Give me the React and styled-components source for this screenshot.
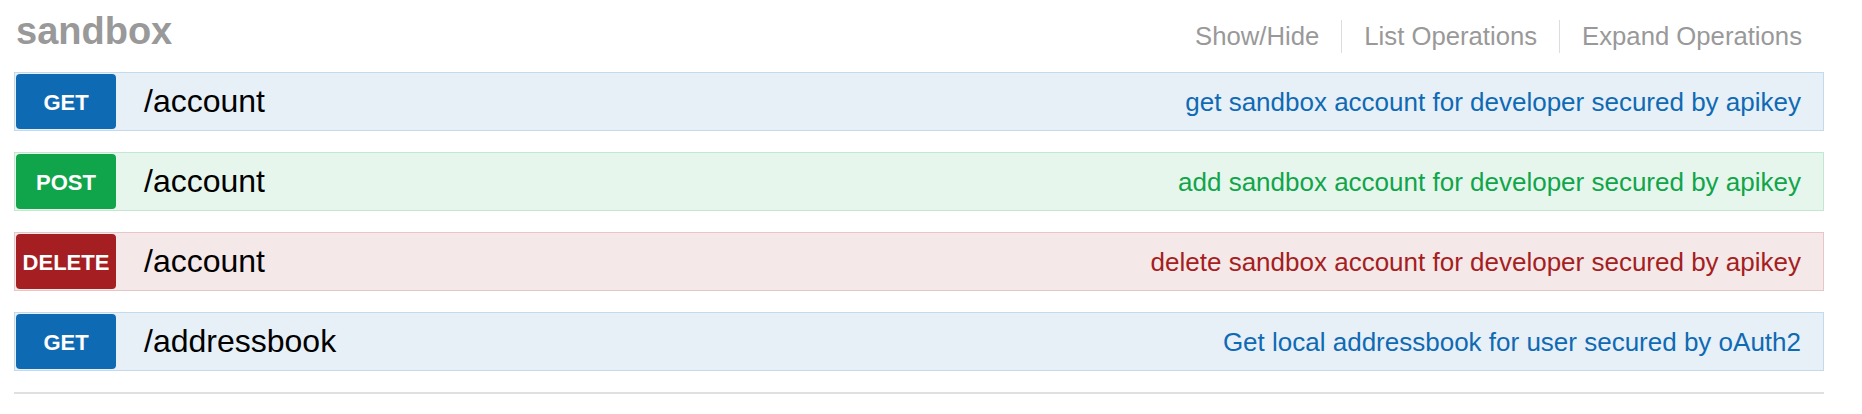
import React from 'react';
import styled, { createGlobalStyle } from 'styled-components';

const GlobalStyle = createGlobalStyle`
  body {
    margin: 0;
    background: #fff;
    font-family: "Liberation Sans", Arial, Helvetica, sans-serif;
  }
`;

const methodColors = {
  get: { main: '#0f6ab4', bg: '#e7f0f7', border: '#c3d9ec' },
  post: { main: '#10a54a', bg: '#e7f6ec', border: '#c3e8d1' },
  delete: { main: '#a41e22', bg: '#f5e8e8', border: '#e8c6c7' },
};

const operations = [
  { method: 'get', path: '/account', summary: 'get sandbox account for developer secured by apikey' },
  { method: 'post', path: '/account', summary: 'add sandbox account for developer secured by apikey' },
  { method: 'delete', path: '/account', summary: 'delete sandbox account for developer secured by apikey' },
  { method: 'get', path: '/addressbook', summary: 'Get local addressbook for user secured by oAuth2' },
];

const App = () => {
  return (
    <>
      <GlobalStyle />
      <Resource>
        <Heading>
          <Title>sandbox</Title>
          <Options>
            <OptionLink>Show/Hide</OptionLink>
            <OptionLink>List Operations</OptionLink>
            <OptionLink>Expand Operations</OptionLink>
          </Options>
        </Heading>
        <Endpoints>
          {operations.map((op, i) => (
            <Operation key={i} $method={op.method}>
              <Badge $method={op.method}>{op.method.toUpperCase()}</Badge>
              <Path>{op.path}</Path>
              <Summary $method={op.method}>{op.summary}</Summary>
            </Operation>
          ))}
        </Endpoints>
      </Resource>
    </>
  );
};

const Resource = styled.div`
  padding: 0 38px 0 14px;
`;

const Heading = styled.div`
  display: flex;
  justify-content: space-between;
  align-items: flex-start;
  padding-top: 12px;
`;

const Title = styled.h2`
  margin: 0;
  padding-left: 2px;
  font-size: 38px;
  line-height: 38px;
  font-weight: bold;
  color: #999;
`;

const Options = styled.div`
  display: flex;
  margin-top: 8px;
`;

const OptionLink = styled.a`
  display: block;
  padding: 0 22px;
  font-size: 25.7px;
  line-height: 33px;
  color: #999;
  cursor: pointer;

  & + & {
    border-left: 1px solid #ddd;
  }
`;

const Endpoints = styled.div`
  display: flex;
  flex-direction: column;
  gap: 21px;
  margin-top: 19px;
  padding-bottom: 21px;
  border-bottom: 2px solid #e0e0e0;
`;

const Operation = styled.div`
  display: flex;
  align-items: center;
  height: 59px;
  box-sizing: border-box;
  padding: 1px;
  background: ${p => methodColors[p.$method].bg};
  border: 1px solid ${p => methodColors[p.$method].border};
`;

const Badge = styled.span`
  display: flex;
  align-items: center;
  justify-content: center;
  flex: none;
  width: 100px;
  height: 55px;
  border-radius: 4px;
  background: ${p => methodColors[p.$method].main};
  color: #fff;
  font-size: 22px;
  font-weight: bold;
  padding-top: 3px;
  box-sizing: border-box;
`;

const Path = styled.span`
  margin-left: 28px;
  font-size: 32px;
  color: #000;
`;

const Summary = styled.span`
  margin-left: auto;
  padding: 2px 21px 0 0;
  font-size: 26px;
  color: ${p => methodColors[p.$method].main};
`;

export default App;
